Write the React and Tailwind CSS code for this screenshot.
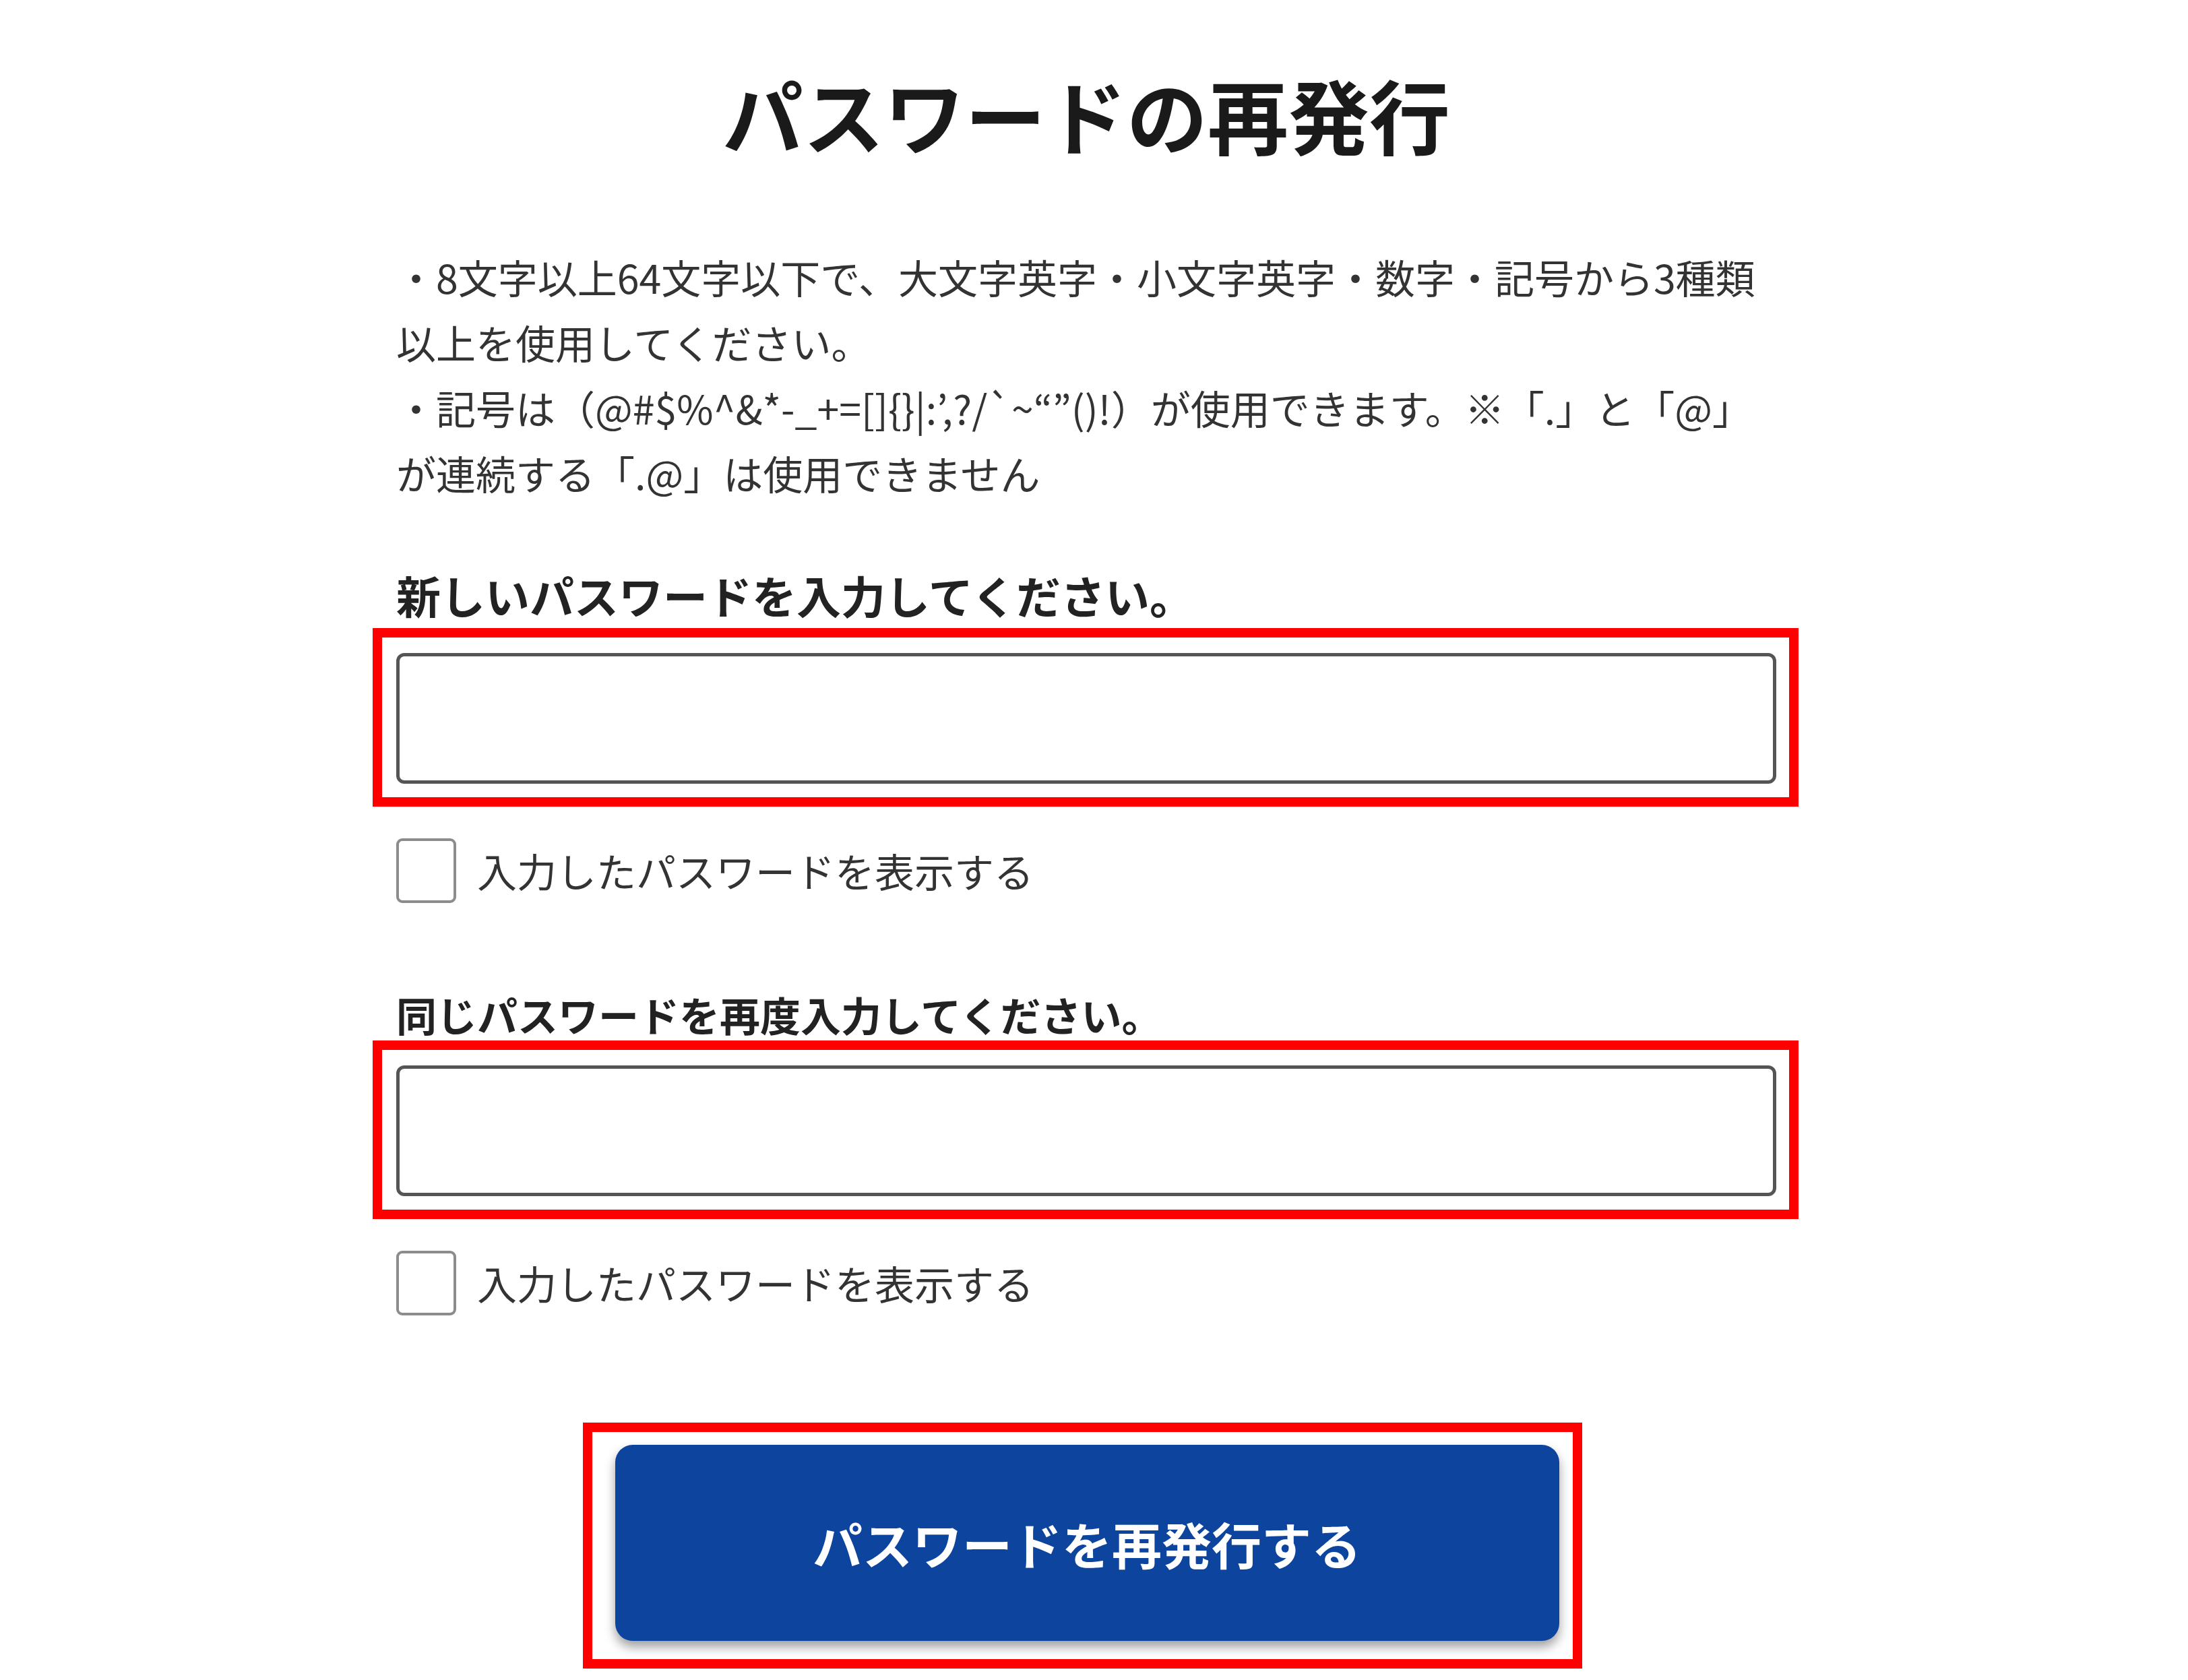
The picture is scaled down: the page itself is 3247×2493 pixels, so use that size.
const fontStack = "font-['Noto_Sans_CJK_JP','Noto_Sans',sans-serif]";

const PasswordField = ({ label, labelClass }) => (
    <div>
        <p className={labelClass}>{label}</p>
        {/* 注釈の赤枠 */}
        <div className="-ml-[35px] -mr-[33px] border-[14px] border-[#ff0000] pl-[21px] pr-[19px] pt-[23px] pb-[20px]">
            <input
                type="password"
                className="block w-full h-[194px] rounded-[12px] border-[5px] border-[#555] bg-white px-6 text-[60px] outline-none"
            />
        </div>
    </div>
);

const ShowPassword = () => (
    <label className="mt-[45px] flex items-center gap-[31px]">
        <span className="block w-[89px] h-[96px] rounded-[9px] border-[4px] border-[#8c8c8c] bg-white" />
        <span className="text-[59px] leading-[100px] text-[#333]">入力したパスワードを表示する</span>
    </label>
);

const App = () => {
    return (
        <div className={`${fontStack} bg-white min-h-[2493px] w-[3224px] flex flex-col items-center pt-[97px]`}>
            <h1 className="text-[120px] font-bold leading-[144px] text-[#1a1a1a] text-center">パスワードの再発行</h1>

            <div className="w-[2048px] mt-[121px]">
                <p className="text-[59px] leading-[97px] text-[#333]">
                    ・8文字以上64文字以下で、大文字英字・小文字英字・数字・記号から3種類以上を使用してください。
                    <br />
                    ・記号は（@#$%^&amp;*-_+=[]{'{}'}|:’,?/`~“”()!）が使用できます。※「.」と「@」が連続する「.@」は使用できません
                </p>

                <div className="mt-[92px]">
                    <PasswordField
                        label="新しいパスワードを入力してください。"
                        labelClass="text-[66px] font-bold leading-[80px] text-[#222] mb-[10px]"
                    />
                </div>
                <ShowPassword />

                <div className="mt-[127px]">
                    <PasswordField
                        label="同じパスワードを再度入力してください。"
                        labelClass="text-[60px] font-bold leading-[72px] text-[#222] mb-[3px]"
                    />
                </div>
                <ShowPassword />
            </div>

            <div className="mt-[157px] -ml-[12px] w-[1483px] border-[14px] border-[#ff0000] pl-[34px] pr-[20px] pt-[19px] pb-[27px]">
                <button className="block w-[1401px] h-[291px] rounded-[26px] bg-[#0c449e] shadow-[0_9px_16px_rgba(0,0,0,0.38)] text-white text-[74px] font-bold">
                    パスワードを再発行する
                </button>
            </div>
        </div>
    );
};

export default App;
